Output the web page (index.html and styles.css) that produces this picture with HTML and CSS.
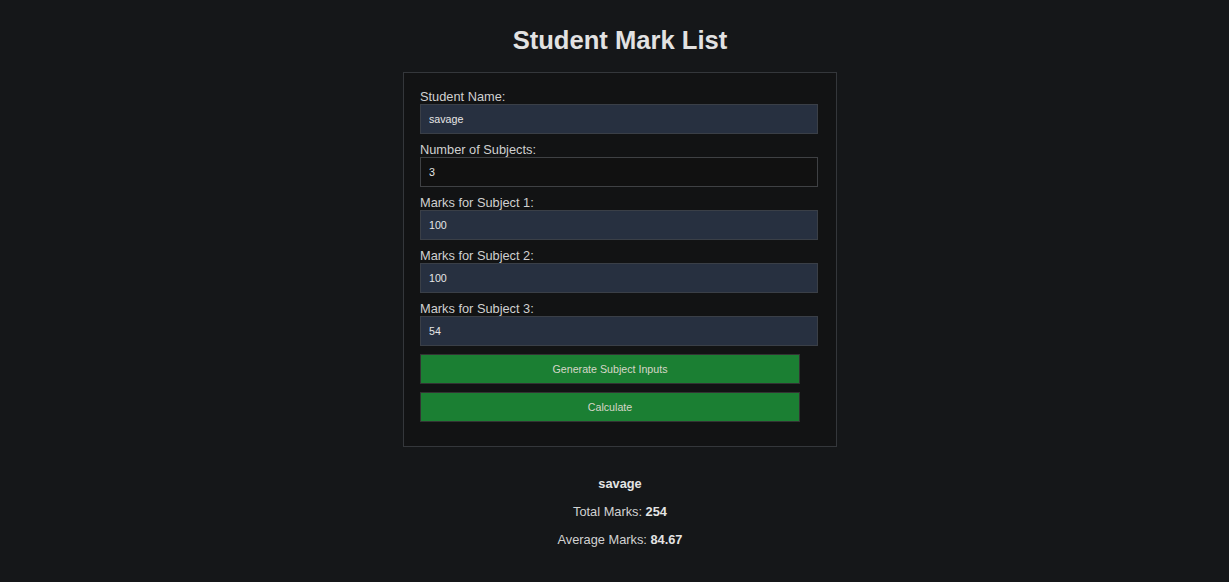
FILE: index.html
```html
<!DOCTYPE html>
<html lang="en">
<head>
<meta charset="utf-8">
<title>Student Mark List</title>
<link rel="stylesheet" href="styles.css">
</head>
<body>
  <h1 class="title">Student Mark List</h1>
  <div class="card">
    <div class="field">
      <label class="label">Student Name:</label>
      <input class="input" type="text" value="savage">
    </div>
    <div class="field">
      <label class="label">Number of Subjects:</label>
      <input class="input input-dark" type="text" value="3">
    </div>
    <div class="field">
      <label class="label">Marks for Subject 1:</label>
      <input class="input" type="text" value="100">
    </div>
    <div class="field">
      <label class="label">Marks for Subject 2:</label>
      <input class="input" type="text" value="100">
    </div>
    <div class="field">
      <label class="label">Marks for Subject 3:</label>
      <input class="input" type="text" value="54">
    </div>
    <button class="btn" type="button">Generate Subject Inputs</button>
    <button class="btn" type="button">Calculate</button>
  </div>
  <div class="result">
    <p class="line"><strong>savage</strong></p>
    <p class="line">Total Marks: <strong>254</strong></p>
    <p class="line">Average Marks: <strong>84.67</strong></p>
  </div>
</body>
</html>
```

FILE: styles.css
```css
html {
  background: #151719;
}
body {
  margin: 8px 8px 8px 19px;
  background: #151719;
  color: #d2d2d2;
  font-family: "Liberation Sans", Arial, sans-serif;
  font-size: 12.8px;
  text-align: center;
}
.title {
  font-size: 25.6px;
  margin: 18px 0 17px;
  color: #e2e2e2;
  font-weight: bold;
}
.card {
  width: 400px;
  margin: 0 auto;
  padding: 16px;
  border: 1px solid #34373b;
  background: #121314;
  text-align: left;
  display: flex;
  flex-direction: column;
  gap: 8px;
}
.field {
  display: flex;
  flex-direction: column;
}
.label {
  color: #d0d0d0;
  line-height: 15px;
}
.input {
  box-sizing: border-box;
  width: 398px;
  height: 30px;
  padding: 0 8px;
  border: 1px solid #3a3f47;
  background: #273040;
  color: #e6e6e6;
  font-family: "Liberation Sans", Arial, sans-serif;
  font-size: 10.67px;
  outline: none;
}
.input-dark {
  background: #111111;
  border-color: #3f4144;
}
.btn {
  box-sizing: border-box;
  width: 380px;
  height: 30px;
  border: 1px solid #333;
  background: #1b7f33;
  color: #d6d6c8;
  font-family: "Liberation Sans", Arial, sans-serif;
  font-size: 10.67px;
  padding: 0;
}
.btn:last-child {
  margin-bottom: 8px;
}
.result {
  padding-top: 16px;
}
.line {
  margin: 13px 0;
  line-height: 15px;
  color: #d2d2d2;
}
.line strong {
  color: #e4e4e4;
}
```
